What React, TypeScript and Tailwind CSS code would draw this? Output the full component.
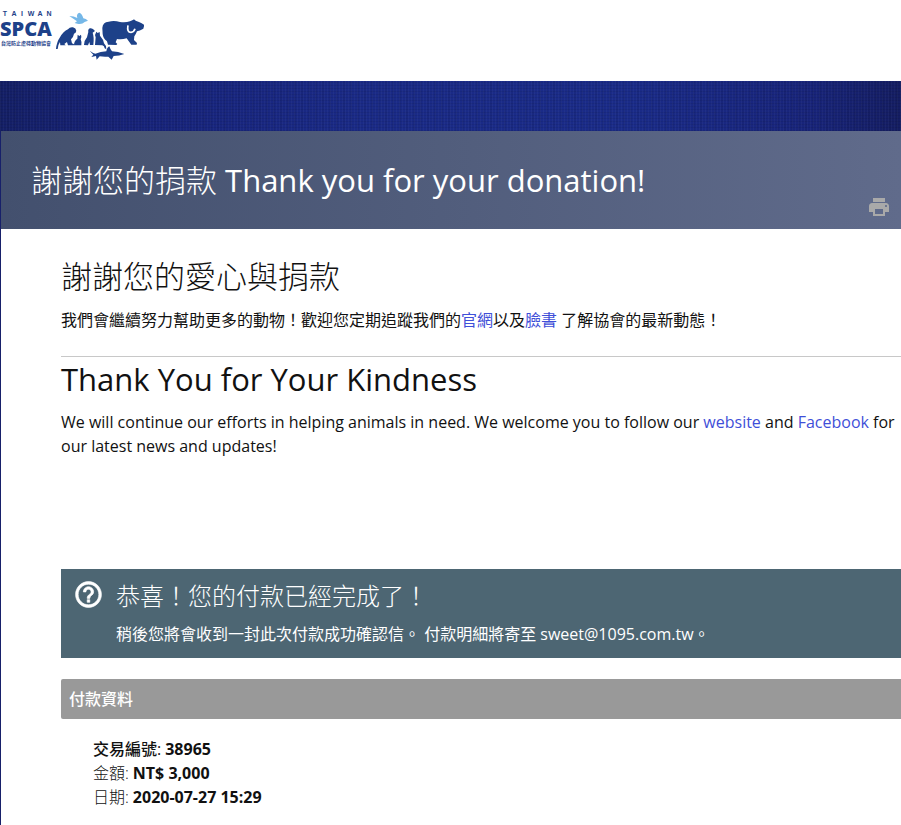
import React from "react";
import { MdPrint, MdHelpOutline } from "react-icons/md";

const TAIWAN: [string, number][] = [
  ["T", 5],
  ["A", 14],
  ["I", 22],
  ["W", 31],
  ["A", 40],
  ["N", 49],
];

function Logo() {
  return (
    <svg role="img" aria-label="Taiwan SPCA" className="block h-20 w-36 fill-[#1d4189]" viewBox="0 0 144 80">
      <g fontSize="7" fontWeight="700" textAnchor="middle" className="font-['Liberation_Sans',sans-serif]">
        {TAIWAN.map(([letter, x]) => (
          <text key={x} x={x} y="16">
            {letter}
          </text>
        ))}
      </g>
      <text x="0" y="36" fontSize="20" fontWeight="800" className="font-['Open_Sans',sans-serif]">
        SPCA
      </text>
      <text x="1" y="45" fontSize="5" fontWeight="700" className="font-['Noto_Sans_CJK_TC',sans-serif]">
        台灣防止虐待動物協會
      </text>
      <g transform="scale(0.3333)">
        {/* bird */}
        <path
          className="fill-[#76b8e8]"
          d="M208 48 Q222 48 232 54 Q228 42 238 38 Q247 42 250 55 Q258 56 264 62 L254 66 Q246 74 232 71 L224 69 L231 64 Q220 56 208 48Z"
        />
        {/* sitting monkey */}
        <path d="M168 147 Q170 126 180 112 Q190 94 204 88 Q210 80 219 82 Q228 84 229 92 Q228 99 222 101 Q221 110 213 118 L216 130 L222 133 L222 136 L204 136 L201 126 L193 132 L197 136 L181 136 L180 126 Q174 134 173 147Z" />
        {/* small cat */}
        <path d="M222 136 Q222 122 232 116 L233 104 L238 108 L243 104 Q246 112 242 118 Q246 126 244 136Z" />
        {/* sitting dog */}
        <path d="M252 135 Q252 122 261 112 L265 96 Q263 88 270 85 Q278 83 285 93 L278 98 Q283 112 280 135 L270 135 L268 126 L264 136Z" />
        {/* sitting cat with a hanging tail */}
        <path d="M285 135 L287 112 Q283 104 289 95 L293 99 L299 96 L300 107 Q311 119 312 130 Q320 137 319 148 L314 145 Q313 138 307 136Z" />
        {/* bear */}
        <path d="M307 84 Q308 66 326 65 Q342 60 360 66 Q376 69 390 64 L397 61 Q402 56 407 62 Q418 65 425 70 L433 75 L430 86 Q419 92 411 94 Q408 102 403 109 L402 120 L411 129 L410 134 L394 134 L380 115 Q364 120 351 117 L347 127 L352 132 L349 135 L324 134 L321 124 Q309 115 308 102Z" />
        <path
          d="M384 76 Q380 97 393 97 Q402 96 405 86"
          className="fill-none stroke-white"
          strokeWidth="5"
        />
        {/* shark */}
        <path d="M269 152 Q280 160 286 161 Q302 155 319 154 Q321 142 328 139 Q331 148 336 154 Q354 155 373 162 Q358 168 341 168 L335 179 L325 170 Q310 171 299 169 L290 179 L288 168 L274 171 L280 164Z" />
      </g>
    </svg>
  );
}

const linkStyle = "text-[#3f4fd8]";

function InfoRow({ label, value, strong }: { label: string; value: string; strong?: boolean }) {
  return (
    <div className="flex gap-1">
      <dt className={strong ? "font-medium" : "font-light"}>{label}</dt>
      <dd className="font-bold">{value}</dd>
    </div>
  );
}

export default function App() {
  return (
    <div className="min-h-screen bg-[#17206a] font-['Open_Sans','Noto_Sans_CJK_TC',sans-serif] text-base leading-6 text-[#111]">
      <header className="h-[81px] bg-white">
        <Logo />
      </header>
      <div className="h-[50px] bg-[linear-gradient(90deg,#141f66_0%,#17237a_15%,#1a2a86_40%,#1a2b88_70%,#18247a_90%,#141d62_100%)]">
        <div className="h-full bg-[repeating-linear-gradient(90deg,#ffffff08_0px_1px,transparent_1px_3px),repeating-linear-gradient(90deg,#0000000d_0px_2px,transparent_2px_7px),repeating-linear-gradient(0deg,#00000012_0px_1px,transparent_1px_3px)]" />
      </div>
      <main className="ml-px min-h-[694px] bg-white">
        <div className="flex h-[98px] items-center justify-between bg-linear-to-r from-[#43506e] to-[#606b8b] pr-[10px] pl-[30px] text-white">
          <h1 className="text-[31px] leading-10">
            <span className="font-light">謝謝您的捐款</span> Thank you for your donation!
          </h1>
          <button type="button" aria-label="Print" className="mb-[10px] self-end text-[#a9a9a9]">
            <MdPrint size={24} />
          </button>
        </div>
        <div className="pt-[27px] pl-[60px]">
          <h2 className="text-[31px] leading-10 font-light">謝謝您的愛心與捐款</h2>
          <p className="mt-3">
            我們會繼續努力幫助更多的動物！歡迎您定期追蹤我們的
            <a href="#website" className={linkStyle}>官網</a>以及
            <a href="#facebook" className={linkStyle}>臉書</a> 了解協會的最新動態！
          </p>
          <hr className="mt-6 border-[#c8c8c8]" />
          <h2 className="mt-[2px] text-[31px] leading-10">Thank You for Your Kindness</h2>
          <p className="mt-[11px]">
            We will continue our efforts in helping animals in need. We welcome you to follow our{" "}
            <a href="#website" className={linkStyle}>website</a> and{" "}
            <a href="#facebook" className={linkStyle}>Facebook</a> for our latest news and updates!
          </p>
          <section className="mt-[111px] flex gap-3 bg-[#4d6673] px-3 pt-[11px] pb-3 text-white">
            <MdHelpOutline
              size={31}
              className="-mt-px shrink-0 [&>path:first-child]:stroke-none [&>path:last-child]:stroke-current [&>path:last-child]:stroke-[0.5]"
            />
            <div>
              <h3 className="text-2xl leading-8 font-light">恭喜！您的付款已經完成了！</h3>
              <p className="mt-[10px]">
                稍後您將會收到一封此次付款成功確認信。 付款明細將寄至{" "}
                <span className="font-medium">sweet@1095.com.tw</span>。
              </p>
            </div>
          </section>
          <h3 className="mt-[21px] rounded-l-xs bg-[#999] px-2 py-2 font-medium text-white">付款資料</h3>
          <dl className="px-8 pt-[18px]">
            <InfoRow label="交易編號:" value="38965" strong />
            <InfoRow label="金額:" value="NT$ 3,000" />
            <InfoRow label="日期:" value="2020-07-27 15:29" />
          </dl>
        </div>
      </main>
    </div>
  );
}
